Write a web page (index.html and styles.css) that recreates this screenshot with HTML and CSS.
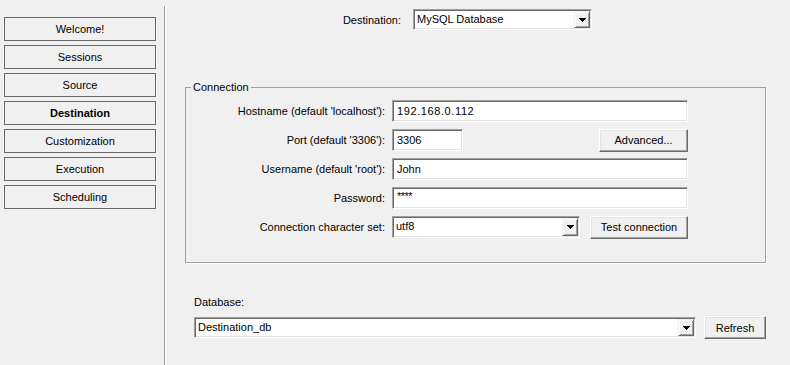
FILE: index.html
```html
<!DOCTYPE html>
<html lang="en">
<head>
    <meta charset="UTF-8">
    <title>Migration Wizard - Destination</title>
    <link rel="stylesheet" href="styles.css">
</head>
<body>
    <div class="window">
        <nav class="steps">
            <button class="step">Welcome!</button>
            <button class="step">Sessions</button>
            <button class="step">Source</button>
            <button class="step current">Destination</button>
            <button class="step">Customization</button>
            <button class="step">Execution</button>
            <button class="step">Scheduling</button>
        </nav>
        <div class="sep"></div>

        <main class="page">
            <div class="dest-row">
                <label class="dest-label">Destination:</label>
                <div class="combo">
                    <span class="combo-text">MySQL Database</span>
                    <span class="combo-btn"><svg width="7" height="4" viewBox="0 0 7 4" shape-rendering="crispEdges"><path d="M0 0h7v1h-1v1h-1v1h-1v1h-1v-1h-1v-1h-1v-1h-1z" fill="#000"/></svg></span>
                </div>
            </div>

            <fieldset class="group">
                <legend>Connection</legend>
                <div class="form">
                    <label>Hostname (default 'localhost'):</label>
                    <div class="field"><div class="edit wide host">192.168.0.112</div></div>

                    <label>Port (default '3306'):</label>
                    <div class="field spread">
                        <div class="edit port">3306</div>
                        <button class="btn advanced">Advanced...</button>
                    </div>

                    <label>Username (default 'root'):</label>
                    <div class="field"><div class="edit wide">John</div></div>

                    <label>Password:</label>
                    <div class="field"><div class="edit wide pass">****</div></div>

                    <label>Connection character set:</label>
                    <div class="field spread">
                        <div class="combo charset">
                            <span class="combo-text">utf8</span>
                            <span class="combo-btn"><svg width="7" height="4" viewBox="0 0 7 4" shape-rendering="crispEdges"><path d="M0 0h7v1h-1v1h-1v1h-1v1h-1v-1h-1v-1h-1v-1h-1z" fill="#000"/></svg></span>
                        </div>
                        <button class="btn test">Test connection</button>
                    </div>
                </div>
            </fieldset>

            <div class="db">
                <div class="db-label">Database:</div>
                <div class="db-row">
                    <div class="combo db-combo">
                        <span class="combo-text">Destination_db</span>
                        <span class="combo-btn"><svg width="7" height="4" viewBox="0 0 7 4" shape-rendering="crispEdges"><path d="M0 0h7v1h-1v1h-1v1h-1v1h-1v-1h-1v-1h-1v-1h-1z" fill="#000"/></svg></span>
                    </div>
                    <button class="btn refresh">Refresh</button>
                </div>
            </div>
        </main>
    </div>
</body>
</html>
```

FILE: styles.css
```css
body {
    margin: 0;
    padding: 0;
    background-color: #f0f0f0;
    font-family: "Liberation Sans", Arial, sans-serif;
    font-size: 11px;
    color: #000;
    width: 790px;
    height: 365px;
    overflow: hidden;
}

.window {
    display: flex;
    height: 365px;
}

/* wizard steps on the left */
.steps {
    width: 152px;
    padding: 17px 8px 0 4px;
    display: flex;
    flex-direction: column;
    gap: 4px;
}

.step {
    height: 24px;
    padding: 0;
    background-color: #f0f0f0;
    border: 1px solid #6a6a6a;
    font-family: inherit;
    font-size: 11px;
    color: #000;
    text-align: center;
}

.step.current {
    font-weight: bold;
}

.sep {
    width: 1px;
    background-color: #a0a0a0;
    border-right: 1px solid #fff;
    margin-top: 6px;
}

.page {
    flex: 1;
    padding: 9px 0 0 19px;
    display: flex;
    flex-direction: column;
}

.dest-row {
    display: grid;
    grid-template-columns: 216px 179px;
    column-gap: 12px;
    align-items: center;
}

.dest-label {
    text-align: right;
}

/* sunken edit box */
.edit {
    box-sizing: border-box;
    height: 22px;
    line-height: 20px;
    padding: 0 4px;
    background-color: #fff;
    border: 1px solid;
    border-color: #a0a0a0 #fff #fff #a0a0a0;
    box-shadow: inset 1px 1px 0 #696969, inset -1px -1px 0 #e3e3e3;
}

.wide {
    width: 296px;
}

.host {
    letter-spacing: 0.6px;
}

.port {
    width: 71px;
}

.pass {
    line-height: 16px;
    letter-spacing: -0.5px;
}

/* drop-down list */
.combo {
    box-sizing: border-box;
    display: flex;
    align-items: stretch;
    height: 21px;
    background-color: #fff;
    border: 1px solid;
    border-color: #a0a0a0 #fff #fff #a0a0a0;
    box-shadow: inset 1px 1px 0 #696969, inset -1px -1px 0 #e3e3e3;
    padding: 1px;
}

.combo-text {
    flex: 1;
    padding-left: 2px;
    line-height: 17px;
}

.combo-btn {
    box-sizing: border-box;
    width: 16px;
    display: flex;
    align-items: center;
    justify-content: center;
    background-color: #f0f0f0;
    border: 1px solid;
    border-color: #f0f0f0 #696969 #696969 #f0f0f0;
    box-shadow: inset 1px 1px 0 #fff, inset -1px -1px 0 #a0a0a0;
}

.btn {
    box-sizing: border-box;
    height: 23px;
    padding: 0;
    background-color: #f0f0f0;
    font-family: inherit;
    font-size: 11px;
    color: #000;
    border: 1px solid;
    border-color: #fff #696969 #696969 #fff;
    box-shadow: inset -1px -1px 0 #a0a0a0, inset 1px 1px 0 #e3e3e3;
}

/* Connection group box */
.group {
    box-sizing: border-box;
    width: 581px;
    margin: 51px 0 0 0;
    padding: 6px 0 24px 0;
    border: 1px solid #a0a0a0;
    box-shadow: 1px 1px 0 #fff;
}

.group legend {
    margin-left: 5px;
    padding: 0 2px;
    line-height: 13px;
}

.form {
    display: grid;
    grid-template-columns: 199px 296px;
    column-gap: 7px;
    row-gap: 7px;
    align-items: center;
}

.form label {
    text-align: right;
}

.field {
    display: flex;
    align-items: center;
    height: 22px;
}

.spread {
    justify-content: space-between;
}

.advanced {
    width: 89px;
}

.charset {
    width: 188px;
    height: 22px;
}

.test {
    width: 98px;
}

/* database chooser */
.db {
    margin-top: 33px;
    padding-left: 9px;
}

.db-label {
    line-height: 13px;
}

.db-row {
    display: flex;
    align-items: center;
    gap: 8px;
    margin-top: 7px;
}

.db-combo {
    width: 502px;
}

.refresh {
    width: 62px;
}
```
